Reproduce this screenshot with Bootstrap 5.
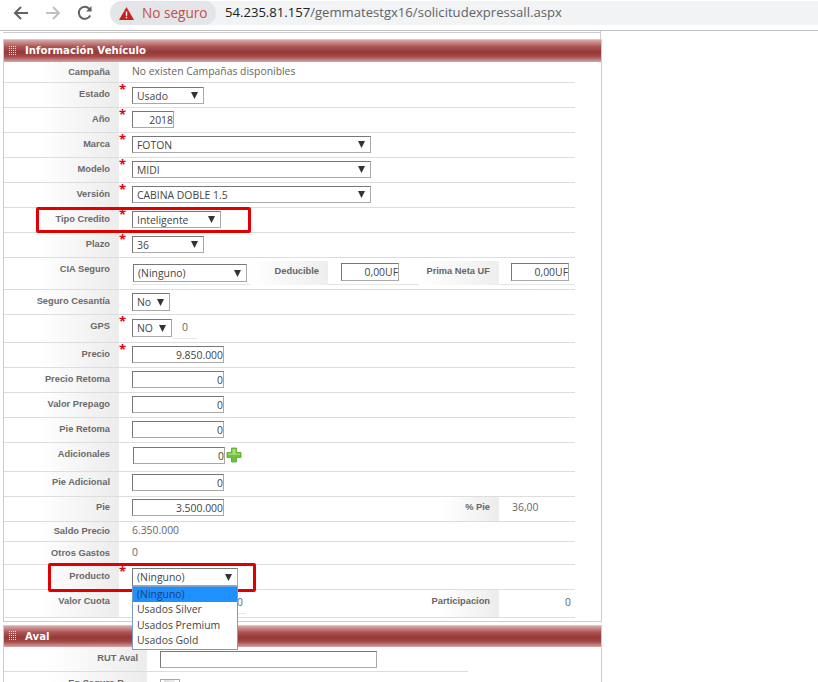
<!DOCTYPE html>
<html lang="es">
<head>
    <meta charset="UTF-8">
    <meta name="viewport" content="width=device-width, initial-scale=1.0">
    <title>Solicitud Express</title>
    <link href="https://cdn.jsdelivr.net/npm/bootstrap@5.3.0/dist/css/bootstrap.min.css" rel="stylesheet">
    <style>
        html, body { height: 682px; overflow: hidden; background: #fff; }
        body { font-family: "Open Sans", "Noto Sans", sans-serif; font-size: 10.4px; color: #666; }

        /* barra del navegador */
        .barra-nav { height: 31px; padding-top: 1px; background: #fff; border-bottom: 1px solid #c0c0c0; }
        .nav-iconos { margin-left: 5px; }
        .nav-icono { width: 32px; height: 24px; display: flex; align-items: center; justify-content: center; }
        .barra-url { height: 24px; margin-left: 9px; flex: 1; background: #f1f3f4; border-radius: 12px 0 0 12px; }
        .pill-seguro { height: 24px; width: 106px; padding-left: 9px; background: #e3e5e8; border-radius: 12px; color: #c5504a; font-size: 13.6px; gap: 8px; }
        .url-texto { margin-left: 9px; font-size: 13.1px; color: #5f6368; white-space: nowrap; }
        .url-host { color: #202124; }

        .panel-previo { height: 8px; width: 598px; margin-left: 3px; background: linear-gradient(#ccc, #ccc) 0 1px / 100% 1px no-repeat; border-right: 1px solid #ccc; }
        .panel-form { width: 599px; margin-left: 3px; border: 1px solid #ccc; }
        .panel-vehiculo { padding-bottom: 3px; }
        .panel-aval { margin-top: 3px; }
        .panel-titulo { height: 22px; padding: 0 0 1px 5px; gap: 8px; color: #fff; font: bold 10.2px "DejaVu Sans", sans-serif;
            background: linear-gradient(#d8a8a8 0, #ad5555 30%, #973838 55%, #a34a4a 75%, #d4a4a4 100%); }
        .panel-aval .panel-titulo { height: 21px; }

        .fila { height: 25px; width: 571px; border-bottom: 1px solid #ddd; }
        .fila-campana { height: 21px; }
        .fila-cia { height: 32px; }
        .fila-gps { height: 28px; }
        .fila-adic { height: 29px; }
        .fila-saldo { height: 20px; }
        .fila-otros { height: 23px; }
        .fila-cuota { height: 28px; }
        .fila-aval { width: 464px; }

        .etiqueta { width: 115px; padding: 4px 9px 0 0; text-align: right; font: bold 9.3px/15px "Liberation Sans", sans-serif; color: #6a6a6a;
            background: linear-gradient(90deg, #fff 30%, #ececec 100%); }
        .etiqueta-baja { padding-top: 3px; }
        .etiqueta-saldo { padding-top: 2px; }
        .etiqueta-aval { width: 143px; }
        .etiqueta-cortada { padding-right: 23px; }
        .estrella { width: 13px; color: #e0000f; font-size: 13px; font-weight: 700; line-height: 12px; }

        .valor { padding-top: 3px; }
        .valor-campana { padding-top: 2px; }
        .valor-saldo { padding-top: 1px; }
        .valor-gps { width: 24px; height: 20px; margin-left: 1px; padding-top: 1px; text-align: center; border-bottom: 1px solid #e5e5e5; }
        .valor-cuota { width: 114px; height: 24px; padding: 5px 3px 0 0; text-align: right; border-bottom: 1px solid #e5e5e5; }
        .valor-pie { width: 76px; padding: 3px 0 0 13px; }
        .valor-part { width: 76px; padding: 5px 4px 0 0; text-align: right; }

        select.campo, input.campo { display: block; height: 17px; border: 1px solid #a9a9a9; border-top-color: #777; border-left-color: #777; border-radius: 0; font-family: inherit; font-size: 10.4px; line-height: 15px; color: #444; box-shadow: none; }
        select.campo { padding: 1px 4px 0; background-color: #fff; background-image: url("data:image/svg+xml,%3Csvg xmlns='http://www.w3.org/2000/svg' width='7' height='7'%3E%3Cpath d='M0 0h7L3.5 7z' fill='%23333'/%3E%3C/svg%3E"); background-repeat: no-repeat; background-position: right 5px center; background-size: 7px 7px; }
        input.campo { text-align: right; padding: 0 0 0 2px; }
        select.alto-18, input.alto-18 { height: 18px; }
        .ancho-72 { width: 72px; } .ancho-42 { width: 42px; } .ancho-239 { width: 239px; } .ancho-89 { width: 89px; }
        .ancho-114 { width: 114px; } .ancho-58 { width: 58px; } .ancho-38 { width: 38px; } .ancho-40 { width: 40px; }
        .ancho-92 { width: 92px; } .ancho-106 { width: 106px; } input.ancho-217 { width: 217px; }
        .pad-3 { padding-top: 3px; }
        .pad-4 { padding-top: 4px; }
        .pad-2 { padding-top: 2px; }
        .izq-1 { margin-left: 1px; }
        .izq-13 { margin-left: 13px; }

        .cia-fila { height: 27px; padding-top: 3px; border-bottom: 1px solid #e5e5e5; }
        .cia-select { margin: 3px 3px 0 1px; }
        .cia-input { margin: 2px 0 0 13px; }
        .cia-input-2 { margin-left: 12px; }
        .sub-etiqueta { height: 24px; width: 78px; padding: 3px 9px 0 0; text-align: right; font: bold 9.3px/15px "Liberation Sans", sans-serif;
            background: linear-gradient(90deg, #fff 0, #eee 100%); }
        .sub-etiqueta-2 { width: 80px; margin-left: 20px; }
        .derecha-etiqueta { width: 80px; height: 100%; padding: 4px 9px 0 0; text-align: right; font: bold 9.3px/15px "Liberation Sans", sans-serif;
            background: linear-gradient(90deg, #fff 30%, #ececec 100%); }
        .derecha-baja { padding-top: 3px; }

        .interruptor { width: 20px; height: 14px; margin: 7px 0 0 13px; border: 1px solid #aaa; background: linear-gradient(90deg, #fff 18%, #ddd 18%, #eee 80%, #fff 80%); }

        .marco-rojo { position: absolute; border: 3px solid #e00000; border-radius: 2px; pointer-events: none; }
        .marco-tipo { left: 36px; top: 207px; width: 215px; height: 26px; }
        .marco-producto { left: 48px; top: 563px; width: 208px; height: 29px; }

        .lista-abierta { position: absolute; left: 132px; top: 586px; width: 106px; height: 64px; background: #fff; border: 1px solid #7a9cc6; font-size: 10.4px; color: #444; overflow: hidden; }
        .lista-item { height: 15.5px; padding-left: 4px; line-height: 15px; }
        .lista-activa { height: 15px; padding-top: 3px; background: #1e90ff; color: #1d3f73; }
        .lista-recorte { height: 12px; line-height: 8px; overflow: hidden; }
    </style>
</head>
<body class="m-0">
    <div class="barra-nav d-flex align-items-start">
        <div class="nav-iconos d-flex">
            <span class="nav-icono"><svg width="16" height="16" viewBox="0 0 16 16" fill="none" stroke="#5f6368" stroke-width="2"><path d="M15 8H2M8 2 2 8l6 6"/></svg></span>
            <span class="nav-icono"><svg width="16" height="16" viewBox="0 0 16 16" fill="none" stroke="#bdc1c6" stroke-width="2"><path d="M1 8h13M8 2l6 6-6 6"/></svg></span>
            <span class="nav-icono"><svg width="16" height="16" viewBox="0 0 16 16" fill="none" stroke="#5f6368" stroke-width="2"><path d="M13.2 10.5A6 6 0 1 1 12.2 3.7L14 5.5"/><path d="M14.5 1v5.5H9" fill="#5f6368" stroke="none"/></svg></span>
        </div>
        <div class="barra-url d-flex align-items-center">
            <div class="pill-seguro d-flex align-items-center">
                <svg width="15" height="13" viewBox="0 0 15 13"><path d="M7.5 0 15 13H0z" fill="#c5221f"/><path d="M6.8 4.5h1.4v4.3H6.8zM6.8 9.8h1.4v1.4H6.8z" fill="#fff"/></svg>
                <span>No seguro</span>
            </div>
            <span class="url-texto"><span class="url-host">54.235.81.157</span>/gemmatestgx16/solicitudexpressall.aspx</span>
        </div>
    </div>
    <div class="panel-previo"></div>

    <div class="panel-form panel-vehiculo">
        <div class="panel-titulo d-flex align-items-center">
            <svg width="8" height="10" viewBox="0 0 8 10"><path d="M0 .5h8M0 2.5h8M0 4.5h8M0 6.5h8M0 8.5h8" stroke="#f2dcdc" stroke-dasharray="1 1"/></svg>
            Información Vehículo
        </div>

        <div class="fila fila-campana d-flex">
            <div class="etiqueta etiqueta-baja">Campaña</div><div class="estrella"></div>
            <div class="valor valor-campana">No existen Campañas disponibles</div>
        </div>
        <div class="fila d-flex">
            <div class="etiqueta">Estado</div><div class="estrella">*</div>
            <div class="pad-4"><select class="campo ancho-72 form-select"><option>Usado</option></select></div>
        </div>
        <div class="fila d-flex">
            <div class="etiqueta">Año</div><div class="estrella">*</div>
            <div class="pad-3"><input class="campo ancho-42 form-control" value="2018"></div>
        </div>
        <div class="fila d-flex">
            <div class="etiqueta">Marca</div><div class="estrella">*</div>
            <div class="pad-3"><select class="campo ancho-239 form-select"><option>FOTON</option></select></div>
        </div>
        <div class="fila d-flex">
            <div class="etiqueta">Modelo</div><div class="estrella">*</div>
            <div class="pad-3"><select class="campo ancho-239 form-select"><option>MIDI</option></select></div>
        </div>
        <div class="fila d-flex">
            <div class="etiqueta">Versión</div><div class="estrella">*</div>
            <div class="pad-3"><select class="campo ancho-239 form-select"><option>CABINA DOBLE 1.5</option></select></div>
        </div>
        <div class="fila d-flex">
            <div class="etiqueta">Tipo Credito</div><div class="estrella">*</div>
            <div class="pad-3"><select class="campo ancho-89 form-select"><option>Inteligente</option></select></div>
        </div>
        <div class="fila d-flex">
            <div class="etiqueta">Plazo</div><div class="estrella">*</div>
            <div class="pad-3"><select class="campo ancho-72 form-select"><option>36</option></select></div>
        </div>
        <div class="fila fila-cia d-flex">
            <div class="etiqueta">CIA Seguro</div><div class="estrella"></div>
            <div class="cia-fila d-flex align-items-start flex-grow-1">
                <select class="campo alto-18 ancho-114 form-select cia-select"><option>(Ninguno)</option></select>
                <div class="sub-etiqueta">Deducible</div>
                <input class="campo alto-18 ancho-58 form-control cia-input" value="0,00UF">
                <div class="sub-etiqueta sub-etiqueta-2">Prima Neta UF</div>
                <input class="campo alto-18 ancho-58 form-control cia-input cia-input-2" value="0,00UF">
            </div>
        </div>
        <div class="fila d-flex">
            <div class="etiqueta">Seguro Cesantía</div><div class="estrella"></div>
            <div class="pad-3"><select class="campo alto-18 ancho-38 form-select"><option>No</option></select></div>
        </div>
        <div class="fila fila-gps d-flex">
            <div class="etiqueta">GPS</div><div class="estrella">*</div>
            <div class="pad-4 d-flex align-items-start"><select class="campo alto-18 ancho-40 form-select"><option>NO</option></select><span class="valor-gps">0</span></div>
        </div>
        <div class="fila d-flex">
            <div class="etiqueta">Precio</div><div class="estrella">*</div>
            <div class="pad-3"><input class="campo ancho-92 form-control" value="9.850.000"></div>
        </div>
        <div class="fila d-flex">
            <div class="etiqueta">Precio Retoma</div><div class="estrella"></div>
            <div class="pad-3"><input class="campo ancho-92 form-control" value="0"></div>
        </div>
        <div class="fila d-flex">
            <div class="etiqueta">Valor Prepago</div><div class="estrella"></div>
            <div class="pad-3"><input class="campo ancho-92 form-control" value="0"></div>
        </div>
        <div class="fila d-flex">
            <div class="etiqueta">Pie Retoma</div><div class="estrella"></div>
            <div class="pad-3"><input class="campo ancho-92 form-control" value="0"></div>
        </div>
        <div class="fila fila-adic d-flex">
            <div class="etiqueta">Adicionales</div><div class="estrella"></div>
            <div class="pad-4 d-flex align-items-start">
                <input class="campo ancho-92 form-control izq-1" value="0">
                <svg class="izq-1" width="16" height="16" viewBox="0 0 16 16"><path d="M5.5 1h5v4.5H15v5h-4.5V15h-5v-4.5H1v-5h4.5z" fill="#6cc23c" stroke="#55a32a" stroke-width=".8"/><path d="M6.5 2h3v4.5H14v1.2H2V6.5h4.5z" fill="#a5e07a"/></svg>
            </div>
        </div>
        <div class="fila d-flex">
            <div class="etiqueta etiqueta-baja">Pie Adicional</div><div class="estrella"></div>
            <div class="pad-2"><input class="campo ancho-92 form-control" value="0"></div>
        </div>
        <div class="fila d-flex">
            <div class="etiqueta etiqueta-baja">Pie</div><div class="estrella"></div>
            <div class="pad-2"><input class="campo ancho-92 form-control" value="3.500.000"></div>
            <div class="ms-auto d-flex h-100">
                <div class="derecha-etiqueta derecha-baja">% Pie</div>
                <div class="valor-pie">36,00</div>
            </div>
        </div>
        <div class="fila fila-saldo d-flex">
            <div class="etiqueta etiqueta-saldo">Saldo Precio</div><div class="estrella"></div>
            <div class="valor valor-saldo">6.350.000</div>
        </div>
        <div class="fila fila-otros d-flex">
            <div class="etiqueta">Otros Gastos</div><div class="estrella"></div>
            <div class="valor">0</div>
        </div>
        <div class="fila d-flex">
            <div class="etiqueta">Producto</div><div class="estrella">*</div>
            <div class="pad-3"><select class="campo alto-18 ancho-106 form-select"><option>(Ninguno)</option></select></div>
        </div>
        <div class="fila fila-cuota d-flex">
            <div class="etiqueta">Valor Cuota</div><div class="estrella"></div>
            <div class="valor-cuota">0</div>
            <div class="ms-auto d-flex h-100">
                <div class="derecha-etiqueta">Participacion</div>
                <div class="valor-part">0</div>
            </div>
        </div>
    </div>

    <div class="panel-form panel-aval">
        <div class="panel-titulo d-flex align-items-center">
            <svg width="8" height="10" viewBox="0 0 8 10"><path d="M0 .5h8M0 2.5h8M0 4.5h8M0 6.5h8M0 8.5h8" stroke="#f2dcdc" stroke-dasharray="1 1"/></svg>
            Aval
        </div>
        <div class="fila fila-aval d-flex">
            <div class="etiqueta etiqueta-aval">RUT Aval</div>
            <div class="pad-4"><input class="campo ancho-217 form-control izq-13" value=""></div>
        </div>
        <div class="fila fila-aval d-flex">
            <div class="etiqueta etiqueta-aval etiqueta-cortada">En Seguro R</div>
            <div class="interruptor"></div>
        </div>
    </div>

    <div class="marco-rojo marco-tipo"></div>
    <div class="marco-rojo marco-producto"></div>
    <div class="lista-abierta">
        <div class="lista-item lista-activa"><div class="lista-recorte">(Ninguno)</div></div>
        <div class="lista-item">Usados Silver</div>
        <div class="lista-item">Usados Premium</div>
        <div class="lista-item">Usados Gold</div>
    </div>

    <script src="https://cdn.jsdelivr.net/npm/bootstrap@5.3.0/dist/js/bootstrap.bundle.min.js"></script>
</body>
</html>
